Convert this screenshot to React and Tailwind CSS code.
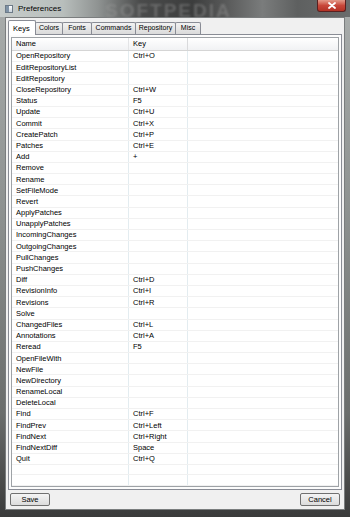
import React from "react";

const ROWS = [
  ["OpenRepository", "Ctrl+O"],
  ["EditRepositoryList", ""],
  ["EditRepository", ""],
  ["CloseRepository", "Ctrl+W"],
  ["Status", "F5"],
  ["Update", "Ctrl+U"],
  ["Commit", "Ctrl+X"],
  ["CreatePatch", "Ctrl+P"],
  ["Patches", "Ctrl+E"],
  ["Add", "+"],
  ["Remove", ""],
  ["Rename", ""],
  ["SetFileMode", ""],
  ["Revert", ""],
  ["ApplyPatches", ""],
  ["UnapplyPatches", ""],
  ["IncomingChanges", ""],
  ["OutgoingChanges", ""],
  ["PullChanges", ""],
  ["PushChanges", ""],
  ["Diff", "Ctrl+D"],
  ["RevisionInfo", "Ctrl+I"],
  ["Revisions", "Ctrl+R"],
  ["Solve", ""],
  ["ChangedFiles", "Ctrl+L"],
  ["Annotations", "Ctrl+A"],
  ["Reread", "F5"],
  ["OpenFileWith", ""],
  ["NewFile", ""],
  ["NewDirectory", ""],
  ["RenameLocal", ""],
  ["DeleteLocal", ""],
  ["Find", "Ctrl+F"],
  ["FindPrev", "Ctrl+Left"],
  ["FindNext", "Ctrl+Right"],
  ["FindNextDiff", "Space"],
  ["Quit", "Ctrl+Q"],
  ["", ""],
  ["", ""],
];

const TABS = [
  { label: "Keys", w: "w-[28px]" },
  { label: "Colors", w: "w-[28px]" },
  { label: "Fonts", w: "w-[30px]" },
  { label: "Commands", w: "w-[45px]" },
  { label: "Repository", w: "w-[41px]" },
  { label: "Misc", w: "w-[26px]" },
];

function Row({ name, keyName }) {
  return (
    <div className="flex h-[11.2px] border-b border-[#f1f1f1]">
      <div className="w-[117px] shrink-0 border-r border-[#e3ecf0] pl-[4px] flex items-center">
        {name}
      </div>
      <div className="w-[59px] shrink-0 border-r border-[#e3ecf0] pl-[4px] flex items-center">
        {keyName}
      </div>
      <div className="flex-1" />
    </div>
  );
}

function Button({ children }) {
  return (
    <button className="w-[40px] h-[13px] rounded-[2px] border border-[#707070] bg-linear-to-b from-[#f4f4f4] to-[#dcdcdc] flex items-center justify-center text-[7.5px] text-black">
      {children}
    </button>
  );
}

export default function App() {
  return (
    <div
      className="w-[350px] h-[517px] flex flex-col overflow-hidden bg-[linear-gradient(180deg,#a9adac_0%,#8e9291_40%,#6a6d6c_80%,#3a3a3a_100%)]"
      style={{ fontFamily: '"Liberation Sans", Arial, sans-serif' }}
    >
      {/* title bar */}
      <div className="relative h-[17px] shrink-0 flex items-center bg-[linear-gradient(90deg,#c6ccca_0%,#b8bebc_18%,#8f9392_28%,#4a4b4b_40%,#3c3d3d_55%,#5a5b5b_65%,#7a7c7c_75%,#5e6060_85%,#6a6c6c_100%)]">
        <div className="ml-[5px] w-[8px] h-[8px] border border-[#6d7b88] bg-linear-to-b from-[#ffffff] to-[#c9d3dc] flex">
          <div className="w-[3px] h-full bg-[#7f93a6]" />
        </div>
        <span className="ml-[5px] text-[8px] text-black">Preferences</span>
        <span className="absolute left-[105px] top-[-3px] text-[19px] font-bold tracking-[2px] text-[#9a9c9c]/40 blur-[0.8px]">
          SOFTPEDIA
        </span>
        <div className="absolute right-[4px] top-0 w-[29px] h-[12px] rounded-b-[3px] border border-t-0 border-[#5a2020] bg-linear-to-b from-[#e39a8a] via-[#c8473a] to-[#b33225] flex items-center justify-center">
          <svg width="8" height="7" viewBox="0 0 8 7">
            <path d="M1 1 L7 6 M7 1 L1 6" stroke="#ffffff" strokeWidth="1.8" strokeLinecap="round" />
          </svg>
        </div>
      </div>

      {/* client area */}
      <div className="flex-1 mx-[5px] mb-[7px] bg-[#f0f0f0] border border-[#7a7d7e] flex flex-col text-[7.5px] text-black">
        {/* tabs */}
        <div className="h-[16px] shrink-0 flex items-end pl-[2px]">
          {TABS.map((t, i) =>
            i === 0 ? (
              <div
                key={t.label}
                className={`${t.w} h-[15px] -mb-px relative z-10 bg-white border border-b-0 border-[#898c95] rounded-t-[2px] pl-[4px] pt-[2px]`}
              >
                {t.label}
              </div>
            ) : (
              <div
                key={t.label}
                className={`${t.w} h-[12px] -ml-px bg-linear-to-b from-[#f2f2f2] to-[#dadada] border border-b-0 border-[#898c95] rounded-t-[2px] flex items-center justify-center text-[7px]`}
              >
                {t.label}
              </div>
            )
          )}
        </div>

        {/* pane */}
        <div className="mx-[2px] h-[456px] shrink-0 bg-[#fcfcfc] border border-[#898c95] p-[2px]">
          <div className="h-full bg-white border border-[#9ea2a6] flex flex-col">
            <div className="flex h-[13px] shrink-0 bg-linear-to-b from-[#ffffff] to-[#f1f2f4] border-b border-[#d5d5d5]">
              <div className="w-[117px] shrink-0 border-r border-[#e3e4e6] pl-[4px] flex items-center">
                Name
              </div>
              <div className="w-[59px] shrink-0 border-r border-[#d9dadc] pl-[4px] flex items-center">
                Key
              </div>
              <div className="flex-1" />
            </div>
            {ROWS.map(([n, k], i) => (
              <Row key={i} name={n} keyName={k} />
            ))}
          </div>
        </div>

        {/* buttons */}
        <div className="flex justify-between px-[4px] pt-[3px]">
          <Button>Save</Button>
          <Button>Cancel</Button>
        </div>
      </div>
    </div>
  );
}
